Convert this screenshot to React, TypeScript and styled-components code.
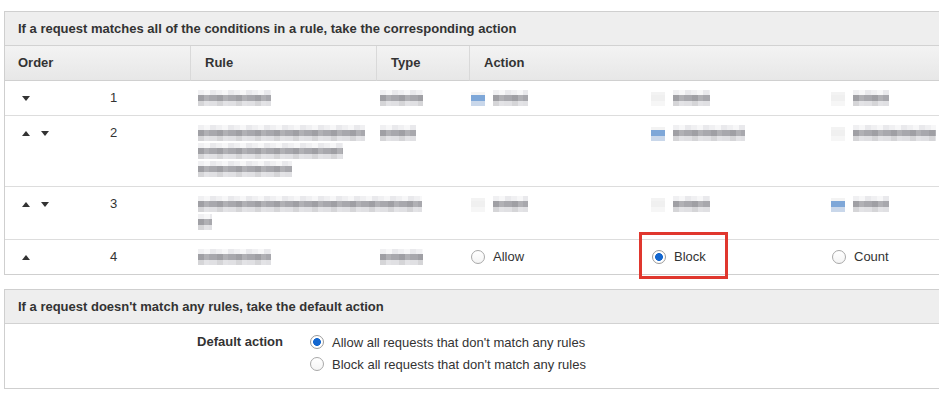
import React from "react"
import styled, { createGlobalStyle } from "styled-components"

const GlobalStyle = createGlobalStyle`
  html, body {
    margin: 0;
    padding: 0;
    background: #ffffff;
    overflow: hidden;
  }
  body {
    font-family: "Liberation Sans", Arial, Helvetica, sans-serif;
    font-size: 13px;
    color: #333333;
  }
`

const Page = styled.div`
  padding: 11px 0 0 4px;
  width: 980px;
`

const Panel = styled.div`
  border: 1px solid #cfcfcf;
  border-right: none;
  margin-bottom: 14px;
`

const PanelHeader = styled.div`
  height: 33px;
  line-height: 33px;
  padding-left: 13px;
  background: #eeeeee;
  border-bottom: 1px solid #d2d2d2;
  font-weight: 700;
  color: #333333;
`

const Grid = styled.div`
  display: grid;
  grid-template-columns: 185px 186px 93px 180px 180px 1fr;
`

const HeadCell = styled.div<{ $span?: number; $first?: boolean }>`
  grid-column: span ${(p) => p.$span || 1};
  height: 34px;
  line-height: 34px;
  padding-left: ${(p) => (p.$first ? 13 : 14)}px;
  background: linear-gradient(#f3f3f3, #e7e7e7);
  border-bottom: 1px solid #d0d0d0;
  border-left: ${(p) => (p.$first ? "none" : "1px solid #d9d9d9")};
  font-weight: 700;
  color: #333333;
`

const Cell = styled.div<{ $last?: boolean; $pad?: number }>`
  position: relative;
  padding: 8px 0 8px ${(p) => p.$pad ?? 0}px;
  line-height: 18px;
  border-bottom: ${(p) => (p.$last ? "none" : "1px solid #dddddd")};
  min-height: 18px;
`

const OrderCell = styled(Cell)`
  display: flex;
  align-items: flex-start;
  padding-left: 17px;
`

const Arrows = styled.div`
  display: flex;
  gap: 11px;
  width: 88px;
  height: 18px;
  align-items: center;
`

const OrderNum = styled.span`
  color: #333333;
`

const Smudge = styled.div<{ $w: number }>`
  display: block;
  width: ${(p) => p.$w}px;
  height: 18px;
  position: relative;
  &::before {
    content: "";
    position: absolute;
    left: 0;
    right: 0;
    top: 1px;
    height: 5px;
    background: repeating-linear-gradient(90deg, #f0f0f2 0 6px, #f7f7f8 6px 12px, #e9e9ec 12px 18px);
  }
  &::after {
    content: "";
    position: absolute;
    left: 0;
    right: 0;
    top: 6px;
    height: 11px;
    background:
      repeating-linear-gradient(90deg, rgba(0, 0, 0, 0.05) 0 6px, rgba(255, 255, 255, 0.1) 6px 11px, rgba(0, 0, 0, 0) 11px 19px),
      linear-gradient(#a8a8ad 0 6px, #e0e0e3 6px);
  }
`

const SmudgeRow = styled.div`
  display: flex;
  align-items: flex-start;
`

const Dot = styled.div<{ $blue?: boolean }>`
  width: 14px;
  height: 18px;
  margin-right: 8px;
  position: relative;
  &::after {
    content: "";
    position: absolute;
    left: 0;
    right: 0;
    top: 3px;
    height: 14px;
    background: ${(p) =>
      p.$blue
        ? "linear-gradient(#f3f3f3 0 3px, #7ea7d8 3px 9px, #c9d7ea 9px)"
        : "linear-gradient(#f3f3f3 0 3px, #f0f0f0 3px 9px, #f6f6f6 9px)"};
  }
`

const RadioLabel = styled.label`
  display: flex;
  align-items: center;
  gap: 8px;
  height: 18px;
  color: #333333;
  cursor: pointer;
`

const RadioCircle = styled.span<{ $checked?: boolean }>`
  box-sizing: border-box;
  width: 14px;
  height: 14px;
  border-radius: 50%;
  border: 1px solid ${(p) => (p.$checked ? "#9a9a9a" : "#a8a8a8")};
  background: ${(p) =>
    p.$checked
      ? "radial-gradient(circle, #1467cf 0 3.6px, #ffffff 4.2px)"
      : "linear-gradient(#ffffff, #f4f4f4)"};
  flex-shrink: 0;
`

const Highlight = styled.div`
  position: absolute;
  left: -10px;
  top: -8px;
  width: 89px;
  height: 47px;
  box-sizing: border-box;
  border: 3px solid #e0372e;
  pointer-events: none;
`

const DefaultBody = styled.div`
  display: grid;
  grid-template-columns: 278px 1fr;
  column-gap: 27px;
  padding: 9px 0 15px;
`

const FieldLabel = styled.div`
  text-align: right;
  font-weight: 700;
  line-height: 18px;
  color: #333333;
`

const Options = styled.div`
  display: flex;
  flex-direction: column;
  gap: 4px;
`

const Tri = ({ up }: { up?: boolean }) => (
  <svg width="8" height="5" viewBox="0 0 8 5">
    <path d={up ? "M0 5 L4 0 L8 5 Z" : "M0 0 L8 0 L4 5 Z"} fill="#333" />
  </svg>
)

const Radio = ({ label, checked }: { label: string; checked?: boolean }) => (
  <RadioLabel>
    <RadioCircle $checked={checked} />
    {label}
  </RadioLabel>
)

const Blurred = ({ blue, w }: { blue?: boolean; w: number }) => (
  <SmudgeRow>
    <Dot $blue={blue} />
    <Smudge $w={w} />
  </SmudgeRow>
)

type Row = {
  n: number
  up: boolean
  down: boolean
  rule: number[]
  type?: number
  actions: ([boolean, number] | null)[]
}

const rows: Row[] = [
  { n: 1, up: false, down: true, rule: [73], type: 43, actions: [[true, 35], [false, 37], [false, 36]] },
  { n: 2, up: true, down: true, rule: [167, 145, 94], type: 36, actions: [null, [true, 72], [false, 83]] },
  { n: 3, up: true, down: true, rule: [224, 14], actions: [[false, 35], [false, 37], [true, 36]] },
]

export default function App() {
  return (
    <Page>
      <GlobalStyle />
      <Panel>
        <PanelHeader>If a request matches all of the conditions in a rule, take the corresponding action</PanelHeader>
        <Grid>
          <HeadCell $first>Order</HeadCell>
          <HeadCell>Rule</HeadCell>
          <HeadCell>Type</HeadCell>
          <HeadCell $span={3}>Action</HeadCell>

          {rows.map((r) => (
            <React.Fragment key={r.n}>
              <OrderCell>
                <Arrows>
                  {r.up && <Tri up />}
                  {r.down && <Tri />}
                </Arrows>
                <OrderNum>{r.n}</OrderNum>
              </OrderCell>
              <Cell $pad={8}>
                {r.rule.map((w, i) => (
                  <Smudge key={i} $w={w} />
                ))}
              </Cell>
              <Cell $pad={4}>{r.type && <Smudge $w={r.type} />}</Cell>
              {r.actions.map((a, i) => (
                <Cell key={i} $pad={2}>
                  {a && <Blurred blue={a[0]} w={a[1]} />}
                </Cell>
              ))}
            </React.Fragment>
          ))}

          <OrderCell $last>
            <Arrows>
              <Tri up />
            </Arrows>
            <OrderNum>4</OrderNum>
          </OrderCell>
          <Cell $last $pad={8}>
            <Smudge $w={73} />
          </Cell>
          <Cell $last $pad={4}>
            <Smudge $w={43} />
          </Cell>
          <Cell $last $pad={2}>
            <Radio label="Allow" />
          </Cell>
          <Cell $last $pad={3}>
            <Radio label="Block" checked />
            <Highlight />
          </Cell>
          <Cell $last $pad={3}>
            <Radio label="Count" />
          </Cell>
        </Grid>
      </Panel>

      <Panel>
        <PanelHeader>If a request doesn't match any rules, take the default action</PanelHeader>
        <DefaultBody>
          <FieldLabel>Default action</FieldLabel>
          <Options>
            <Radio label="Allow all requests that don't match any rules" checked />
            <Radio label="Block all requests that don't match any rules" />
          </Options>
        </DefaultBody>
      </Panel>
    </Page>
  )
}
